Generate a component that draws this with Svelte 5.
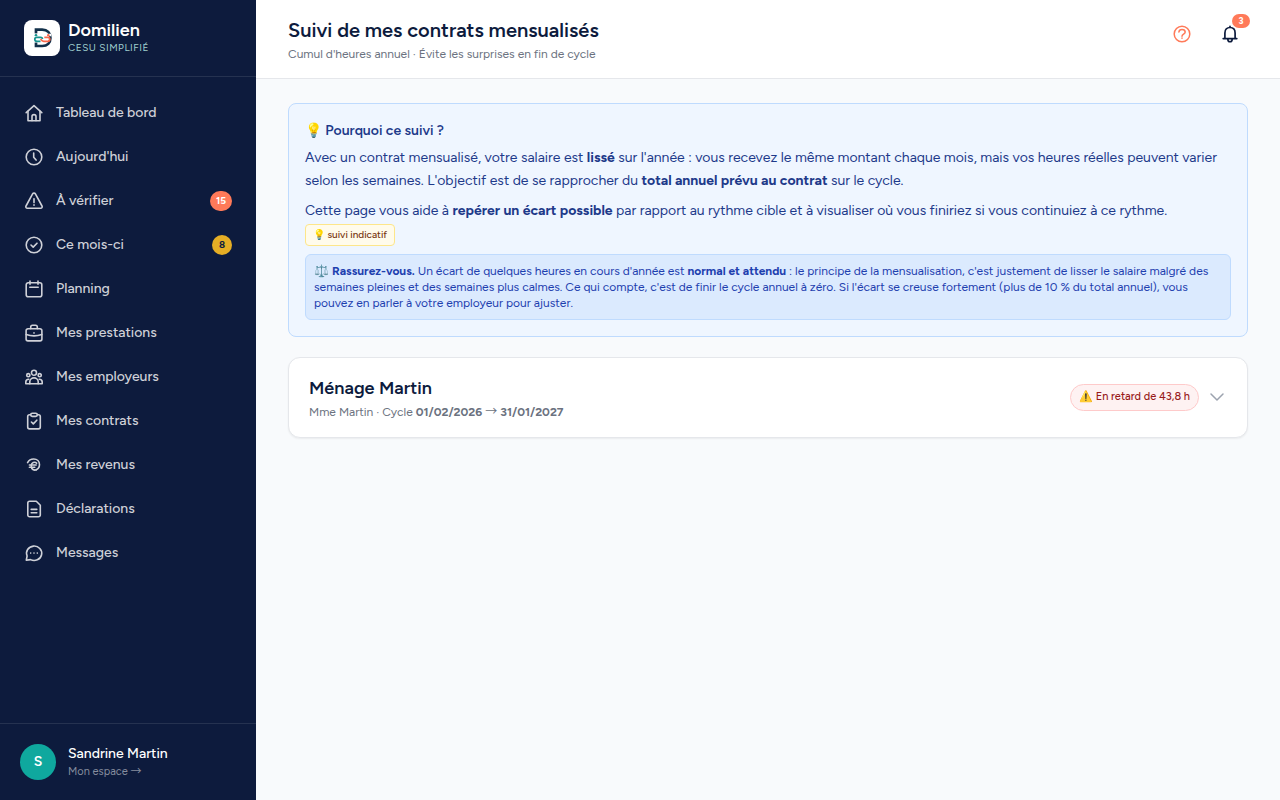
<script>
  const nav = [
    { label: 'Tableau de bord', icon: 'home' },
    { label: "Aujourd'hui", icon: 'clock' },
    { label: 'À vérifier', icon: 'alert', count: 15, tone: 'coral' },
    { label: 'Ce mois-ci', icon: 'check', count: 8, tone: 'gold' },
    { label: 'Planning', icon: 'calendar' },
    { label: 'Mes prestations', icon: 'briefcase' },
    { label: 'Mes employeurs', icon: 'people' },
    { label: 'Mes contrats', icon: 'clipboard' },
    { label: 'Mes revenus', icon: 'euro' },
    { label: 'Déclarations', icon: 'document' },
    { label: 'Messages', icon: 'chat' }
  ];

  const icons = {
    home: ['M2.2 9.6 10 2.6l7.8 7', 'M4 8.4v9.4h12V8.4', 'M8 17.6v-4a2 2 0 0 1 4 0v4'],
    clock: ['M10 2.2a7.8 7.8 0 1 0 0 15.6 7.8 7.8 0 0 0 0-15.6Z', 'M9.7 6v4.2l2.4 2.9'],
    alert: ['M8.6 2.9 2 15c-.6 1.1.2 2.3 1.4 2.3h13.2c1.2 0 2-1.2 1.4-2.3L11.4 2.9c-.6-1.1-2.2-1.1-2.8 0Z', 'M10 7.8v3.8', 'M10 13.9v.3'],
    check: ['M10 2.2a7.8 7.8 0 1 0 0 15.6 7.8 7.8 0 0 0 0-15.6Z', 'm7 10 2.2 2.1L13 8.2'],
    calendar: ['M4.2 3.8h11.6a2 2 0 0 1 2 2v9.9a2 2 0 0 1-2 2H4.2a2 2 0 0 1-2-2V5.8a2 2 0 0 1 2-2Z', 'M6 2v3.2M14 2v3.2M5.8 8.2h8.4'],
    briefcase: ['M4 5.8h12a1.9 1.9 0 0 1 1.9 1.9V16a1.9 1.9 0 0 1-1.9 1.9H4A1.9 1.9 0 0 1 2.1 16V7.7A1.9 1.9 0 0 1 4 5.8Z', 'M6.7 5.6V4a1.8 1.8 0 0 1 1.8-1.8h3A1.8 1.8 0 0 1 13.3 4v1.6', 'M2.2 11.6c4.8 1.6 10.8 1.6 15.6 0', 'M10 9.9v.2'],
    people: ['M10 3.2a2.5 2.5 0 1 0 0 5 2.5 2.5 0 0 0 0-5Z', 'M4.3 6.6a1.6 1.6 0 1 0 0 3.2 1.6 1.6 0 0 0 0-3.2ZM15.7 6.6a1.6 1.6 0 1 0 0 3.2 1.6 1.6 0 0 0 0-3.2Z', 'M5.8 16.8v-2.2a4.2 3.7 0 0 1 8.4 0v2.2', 'M4.8 12.3c-1.9 0-3 1-3 2.7v1.8h16.4V15c0-1.7-1.1-2.7-3-2.7'],
    clipboard: ['M6.5 3.8h-1A1.8 1.8 0 0 0 3.7 5.6v10.5a1.8 1.8 0 0 0 1.8 1.8h9a1.8 1.8 0 0 0 1.8-1.8V5.6a1.8 1.8 0 0 0-1.8-1.8h-1', 'M8.3 2.2h3.4a1.5 1.5 0 0 1 0 3.2H8.3a1.5 1.5 0 0 1 0-3.2Z', 'm7.4 11 1.9 1.9 3.5-3.7'],
    euro: ['M3.6 7.6C4.7 5.4 6.9 4 9.7 4c3.4 0 5.8 2.3 5.8 5.5 0 2.6-1.3 4.5-3.3 5.3', 'M12.6 8.1a3.2 3.2 0 0 0-5.3 2.3v1.2c0 2.6 2.7 4.1 5 3.2', 'M5.4 10h6.8M5.4 12.2h5.4'],
    document: ['M5.6 2.2h6.7l4 4v9.8a1.8 1.8 0 0 1-1.8 1.8H5.6A1.8 1.8 0 0 1 3.8 16V4a1.8 1.8 0 0 1 1.8-1.8Z', 'M7.2 10.4h5.6M7.2 13.8h5.6'],
    chat: ['M2.3 17.2 3.1 13A7.6 7.2 0 1 1 6.5 16.6Z', 'M6.7 10v.1M10 10v.1M13.3 10v.1']
  };
</script>

<div class="app">
  <aside>
    <div class="brand">
      <span class="logo">
        <svg viewBox="0 0 36 36" width="36" height="36" fill="none" aria-hidden="true">
          <path d="M12 13.5V9.7h6.2c5.2 0 8.2 3.400 8.200 8.200s-3 8.100-8.200 8.100H12v-3.500" stroke="#12304a" stroke-width="2.700" />
          <path d="M9.500 15h5M22 15h5" stroke="#fff" stroke-width="2.600" />
          <circle cx="12" cy="15.200" r="1.300" fill="#17948f" />
          <circle cx="24.300" cy="15.200" r="1.300" fill="#f9694c" />
          <path d="M9.500 19.300h15" stroke="#fff" stroke-width="5.600" />
          <path d="M16.500 21.300h-3.700a2 2 0 0 1 0-4h3.700c1.300 0 2 .8 2 1.800" stroke="#17948f" stroke-width="1.700" />
          <path d="M20.300 17.300h3.500a2 2 0 0 1 0 4h-4.100c-1.500 0-2.400-1.200-3.100-2.200" stroke="#f9694c" stroke-width="1.700" />
        </svg>
      </span>
      <div>
        <div class="brand-name">Domilien</div>
        <div class="brand-tag">CESU SIMPLIFIÉ</div>
      </div>
    </div>

    <nav aria-label="Navigation principale">
      {#each nav as item}
        <a href="#{item.icon}">
          <svg class="icon" viewBox="0 0 20 20" aria-hidden="true">
            {#each icons[item.icon] as d}<path {d} />{/each}
          </svg>
          <span class="label">{item.label}</span>
          {#if item.count}<span class="count {item.tone}">{item.count}</span>{/if}
        </a>
      {/each}
    </nav>

    <a class="profile" href="#profil">
      <span class="avatar">S</span>
      <span class="who">
        <span class="name">Sandrine Martin</span>
        <span class="space">Mon espace <span class="arrow">→</span></span>
      </span>
    </a>
  </aside>

  <div class="page">
    <header>
      <div>
        <h1>Suivi de mes contrats mensualisés</h1>
        <p>Cumul d'heures annuel · Évite les surprises en fin de cycle</p>
      </div>
      <div class="actions">
        <button class="help" aria-label="Aide">
          <svg class="icon" viewBox="0 0 20 20" aria-hidden="true">
            <path d="M10 2.2a7.8 7.8 0 1 0 0 15.6 7.8 7.8 0 0 0 0-15.6Z" />
            <path d="M6.9 8c.2-1.7 1.4-2.6 3.1-2.6 1.9 0 3.2 1 3.2 2.6 0 2.1-3.2 2.1-3.2 4.2M10 14v.2" />
          </svg>
        </button>
        <button class="bell" aria-label="Notifications">
          <svg class="icon" viewBox="0 0 20 20" aria-hidden="true">
            <path d="M3.2 14.6h13.6M4.9 14.4V9C4.9 5.5 7.1 3.5 10 3.5s5.1 2 5.1 5.5v5.4M10 2.3v1M7.8 14.9c0 3.8 4.4 3.8 4.4 0" />
          </svg>
          <span class="notif">3</span>
        </button>
      </div>
    </header>

    <main>
      <section class="info">
        <h2>💡 Pourquoi ce suivi ?</h2>
        <p>
          Avec un contrat mensualisé, votre salaire est <strong>lissé</strong> sur l'année : vous recevez le même montant chaque mois, mais vos heures réelles peuvent varier selon les semaines. L'objectif est de se rapprocher du <strong>total annuel prévu au contrat</strong> sur le cycle.
        </p>
        <p>
          Cette page vous aide à <strong>repérer un écart possible</strong> par rapport au rythme cible et à visualiser où vous finiriez si vous continuiez à ce rythme.
          <span class="chip">💡 suivi indicatif</span>
        </p>
        <div class="note">
          ⚖️ <strong>Rassurez-vous.</strong> Un écart de quelques heures en cours d'année est <strong>normal et attendu</strong> : le principe de la mensualisation, c'est justement de lisser le salaire malgré des semaines pleines et des semaines plus calmes. Ce qui compte, c'est de finir le cycle annuel à zéro. Si l'écart se creuse fortement (plus de 10 % du total annuel), vous pouvez en parler à votre employeur pour ajuster.
        </div>
      </section>

      <button class="contract" aria-expanded="false">
        <span class="details">
          <span class="title">Ménage Martin</span>
          <span class="cycle">Mme Martin · Cycle <strong>01/02/2026</strong> <span class="arrow">→</span> <strong>31/01/2027</strong></span>
        </span>
        <span class="status">⚠️ En retard de 43,8 h</span>
        <svg class="chevron" viewBox="0 0 20 20" aria-hidden="true"><path d="m4 7 6 6 6-6" /></svg>
      </button>
    </main>
  </div>
</div>

<style>
  :global(body) {
    margin: 0;
    background: #f8fafc;
  }
  .app {
    display: flex;
    min-height: 100vh;
    font-family: Figtree, sans-serif;
    font-size: 14px;
    line-height: 20px;
    color: #0d1b3d;
  }
  .app * {
    box-sizing: border-box;
  }
  h1, h2, p {
    margin: 0;
  }
  a {
    text-decoration: none;
    color: inherit;
  }
  button {
    font: inherit;
    color: inherit;
    border: 0;
    padding: 0;
    background: none;
    cursor: pointer;
  }
  .icon {
    width: 20px;
    height: 20px;
    flex: none;
    fill: none;
    stroke: currentColor;
    stroke-width: 1.5;
    stroke-linecap: round;
    stroke-linejoin: round;
  }
  .arrow {
    font-family: 'Noto Sans CJK JP', sans-serif;
    line-height: 1;
  }

  aside {
    width: 256px;
    flex: none;
    display: flex;
    flex-direction: column;
    background: #0d1b3d;
    color: #fff;
  }
  .brand {
    display: flex;
    align-items: center;
    gap: 8px;
    padding: 20px 24px;
    border-bottom: 1px solid #253250;
  }
  .logo {
    width: 36px;
    height: 36px;
    border-radius: 8px;
    background: #fff;
  }
  .logo svg {
    display: block;
  }
  .brand-name {
    font-size: 18px;
    font-weight: 600;
    line-height: 20px;
  }
  .brand-tag {
    font-size: 10px;
    line-height: 16px;
    letter-spacing: 0.5px;
    color: #9fcfcf;
  }
  nav {
    flex: 1;
    display: flex;
    flex-direction: column;
    gap: 4px;
    padding: 16px 12px;
  }
  nav a {
    display: flex;
    align-items: center;
    gap: 12px;
    height: 40px;
    padding: 0 12px;
    color: #cfd1d8;
  }
  nav .icon {
    stroke-width: 1.6;
  }
  .label {
    flex: 1;
    font-weight: 500;
  }
  .count {
    min-width: 20px;
    padding: 0 6px;
    border-radius: 10px;
    font-size: 10px;
    font-weight: 700;
    line-height: 20px;
    text-align: center;
  }
  .coral {
    background: #ff7a59;
    color: #fff;
  }
  .gold {
    background: #e5ae25;
    color: #0d1b3d;
  }
  .profile {
    display: flex;
    align-items: center;
    gap: 12px;
    padding: 20px;
    border-top: 1px solid #253250;
  }
  .avatar {
    width: 36px;
    height: 36px;
    border-radius: 50%;
    background: #0fa89e;
    font-weight: 600;
    line-height: 36px;
    text-align: center;
  }
  .who {
    display: grid;
  }
  .name {
    font-weight: 500;
    line-height: 20px;
  }
  .space {
    font-size: 11px;
    line-height: 16px;
    color: #868d9e;
  }

  .page {
    flex: 1;
    min-width: 0;
  }
  header {
    display: flex;
    justify-content: space-between;
    align-items: flex-start;
    padding: 16px 32px;
    background: #fff;
    border-bottom: 1px solid #e5e7eb;
  }
  h1 {
    font-size: 20px;
    font-weight: 600;
    line-height: 28px;
  }
  header p {
    margin-top: 2px;
    font-size: 12px;
    line-height: 16px;
    color: #6b7280;
  }
  .actions {
    display: flex;
    gap: 12px;
  }
  .actions button {
    position: relative;
    width: 36px;
    height: 36px;
  }
  .actions .icon {
    display: block;
    margin: auto;
  }
  .help {
    color: #ff7a59;
  }
  .bell .icon {
    stroke-width: 1.7;
  }
  .notif {
    position: absolute;
    top: -2px;
    right: -2px;
    width: 18px;
    border-radius: 7px;
    background: #ff7a59;
    color: #fff;
    font-size: 9px;
    font-weight: 700;
    line-height: 14px;
    text-align: center;
  }

  main {
    display: grid;
    gap: 20px;
    padding: 24px 32px;
  }
  .info {
    padding: 16px;
    border: 1px solid #bfdbfe;
    border-radius: 8px;
    background: #eff6ff;
    color: #1e3a8a;
  }
  h2 {
    margin-bottom: 4px;
    font-size: 14px;
    font-weight: 600;
    line-height: 22px;
  }
  .info p {
    line-height: 23px;
  }
  .info p + p {
    margin-top: 7px;
  }
  .chip {
    display: inline-block;
    padding: 0 7px;
    border: 1px solid #fde68a;
    border-radius: 4px;
    background: #fffbeb;
    color: #78350f;
    font-size: 10px;
    font-weight: 500;
    line-height: 20px;
    vertical-align: middle;
  }
  .note {
    margin-top: 8px;
    padding: 8px;
    border: 1px solid #bfdbfe;
    border-radius: 6px;
    background: #dbeafe;
    color: #1e40af;
    font-size: 12px;
    line-height: 16px;
  }
  .contract {
    display: flex;
    align-items: center;
    gap: 8px;
    width: 100%;
    padding: 16px 20px;
    border: 1px solid #e5e7eb;
    border-radius: 12px;
    background: #fff;
    box-shadow: 0 1px 2px rgb(0 0 0 / 0.06);
    text-align: left;
  }
  .details {
    flex: 1;
    display: grid;
    gap: 2px;
    padding-bottom: 1px;
  }
  .title {
    font-size: 18px;
    font-weight: 600;
    line-height: 28px;
  }
  .cycle {
    font-size: 12px;
    line-height: 16px;
    color: #6b7280;
  }
  .status {
    padding: 0 8px 2px;
    border: 1px solid #fecaca;
    border-radius: 14px;
    background: #fef2f2;
    color: #991b1b;
    font-size: 11px;
    font-weight: 500;
    line-height: 23px;
  }
  .chevron {
    width: 20px;
    height: 20px;
    fill: none;
    stroke: #9ca3af;
    stroke-width: 1.5;
    stroke-linecap: round;
    stroke-linejoin: round;
  }
</style>
